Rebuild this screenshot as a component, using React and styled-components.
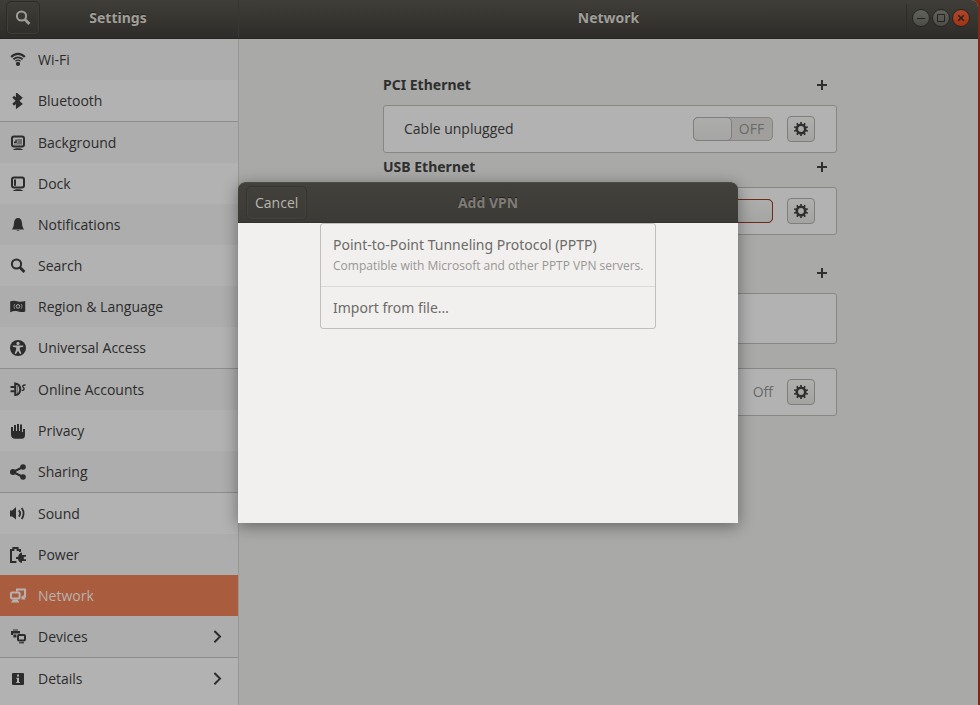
import React from 'react';
import styled, { createGlobalStyle, css } from 'styled-components';

const icons = {
    search: (
        <g fill="none" stroke="currentColor" strokeWidth="2">
            <circle cx="6.5" cy="6" r="4.6"/>
            <path d="M9.8 9.3 L14.4 13.9" strokeWidth="2.8"/>
        </g>
    ),
    wifi: (
        <g fill="none" stroke="currentColor">
            <path d="M1.2 5 C5 0.8 11 0.8 14.8 5" strokeWidth="2.2"/>
            <path d="M3.4 7.4 C6 4.8 10 4.8 12.6 7.4" strokeWidth="1.8"/>
            <path d="M5.4 9.2 C7 7.8 9 7.8 10.6 9.2" strokeWidth="1.2"/>
            <circle cx="8" cy="11.9" r="2.1" fill="currentColor" stroke="none"/>
        </g>
    ),
    bluetooth: (
        <path d="M3.2 3.8 L10.8 10.8 L7.2 13.6 V1.8 L10.8 4.8 L3.2 11.8" fill="none" stroke="currentColor" strokeWidth="2.6"/>
    ),
    background: (
        <g>
            <rect x="2" y="1.5" width="12" height="10" rx="2" fill="none" stroke="currentColor" strokeWidth="2"/>
            <path d="M7.4 4 h4.6 v5.4 h-8 v-1 h3.4 z" opacity="0.5"/>
            <path d="M4 8 V6.6 H5.4 V4.6 H6.8 V8 Z"/>
            <path d="M3 15 C3.6 12.8 12.4 12.8 13 15 Z"/>
        </g>
    ),
    dock: (
        <g>
            <rect x="2" y="1.5" width="12" height="10" rx="2" fill="none" stroke="currentColor" strokeWidth="2"/>
            <path d="M4 3.4 h2 v6.4 h-2 z"/>
            <path d="M3 15 C3.6 12.8 12.4 12.8 13 15 Z"/>
        </g>
    ),
    bell: (
        <path d="M8 1 C10.6 1 11.8 3 12 6 C12.2 9.4 13 11 14 12.4 H2 C3 11 3.8 9.4 4 6 C4.2 3 5.4 1 8 1 Z M6.4 13.2 h3.2 c-.4 1 -2.8 1 -3.2 0 z"/>
    ),
    region: (
        <g>
            <path d="M0.2 2.6 C3 1.2 5 2 8 2.6 C11 3.2 13 2.6 15.2 2 V12.4 C13 13.6 11 13 8 12.4 C5 11.8 3 12.2 0.2 13.2 Z"/>
            <g fill="none" stroke="#aeaeae" strokeWidth="1">
                <circle cx="8" cy="7.4" r="1.8"/>
                <path d="M4.8 5 C3.8 6.4 3.8 8.4 4.8 9.8 M11.2 5 C12.2 6.4 12.2 8.4 11.2 9.8" opacity="0.7"/>
            </g>
        </g>
    ),
    access: (
        <g>
            <circle cx="8" cy="8" r="8"/>
            <g fill="#b2b2b2">
                <circle cx="8" cy="3.4" r="1.6"/>
                <path d="M2.8 5.4 H13.2 V6.8 L9.8 7.4 V9.6 L11.4 13.4 L10 14 L8 10.8 L6 14 L4.6 13.4 L6.2 9.6 V7.4 L2.8 6.8 Z"/>
            </g>
        </g>
    ),
    accounts: (
        <g fill="none" stroke="currentColor">
            <path d="M0.5 5 H5 M0.5 9.2 H5" strokeWidth="2"/>
            <path d="M5.2 1.4 V13 C9 12.6 10.2 10 10.2 7.2 C10.2 4.4 9 1.8 5.2 1.4 Z" strokeWidth="2"/>
            <path d="M7.4 4 V11" opacity="0.5"/>
            <path d="M15.6 3 C13 2.8 12.2 3.8 13 5 C14.4 6.2 14.6 7.6 13 8.4 H11.6" strokeWidth="1.4"/>
        </g>
    ),
    hand: (
        <path d="M1 4 h2 v4 h1 V2 h2 v6 h1 V1 h2 v7 h1 V1.6 h2 V9 h1 V6 h2 v6 c0 2 -1 3.8 -3 3.8 h-7 c-2 0 -4 -1.6 -4 -4 z"/>
    ),
    share: (
        <g>
            <path d="M13 3 L3 8 L13 13" fill="none" stroke="currentColor" strokeWidth="2"/>
            <circle cx="13" cy="3" r="2.8"/>
            <circle cx="3" cy="8" r="3"/>
            <circle cx="13" cy="13" r="2.8"/>
        </g>
    ),
    sound: (
        <g>
            <path d="M0 4.6 H2.2 L6 1 V13.6 L2.2 10.6 H0 Z"/>
            <path d="M8.8 4.4 C10.4 6.2 10.4 8.8 8.8 10.6 M11.6 2 C14.2 5 14.2 10 11.6 13" fill="none" stroke="currentColor" strokeWidth="1.8"/>
        </g>
    ),
    power: (
        <g>
            <path d="M6.4 15 H1 V3 H3.4 V1 H7.6 V3 H10 V5" fill="none" stroke="currentColor" strokeWidth="2"/>
            <path d="M12 5.6 V8 H16 V9.8 H13.8 V12.2 H16 V14 H12 V16 C9.4 15.6 8.4 14 8 12 H6 V10 H8 C8.4 8 9.6 6 12 5.6 Z"/>
        </g>
    ),
    network: (
        <g>
            <path d="M7 3.4 V1.4 H15 V8.6 H12.6" fill="none" stroke="currentColor" strokeWidth="2"/>
            <rect x="1" y="4.6" width="8.6" height="6" rx="1" fill="none" stroke="currentColor" strokeWidth="2"/>
            <path d="M3 11.6 H7.6 L9.4 14.4 H1 Z M11.4 8.6 h2.6 l1.6 3 h-4.2 z"/>
        </g>
    ),
    devices: (
        <g>
            <path d="M3 0.4 h5 v1 h-5 z M1 2 h9 v2.4 h-9 z M3.4 5.6 h3 v2.8 h-3 z M1 2 h2 v4 H1 z"/>
            <rect x="8" y="6" width="7" height="5.6" rx="1" fill="none" stroke="currentColor" strokeWidth="2"/>
            <path d="M9.2 13.2 h4.8 v1.2 h-4.8 z"/>
        </g>
    ),
    details: (
        <g>
            <rect x="2" y="2" width="12" height="12" rx="1"/>
            <path d="M7 3.6 h2 v2 h-2 z M6.4 6.8 H9 V11 h.8 v1 H6.2 v-1 H7 V8 h-.6 z" fill="#b2b2b2"/>
        </g>
    ),
    gear: (
        <g fill="none" stroke="currentColor">
            <circle cx="8" cy="8" r="4.2" strokeWidth="2.6"/>
            <circle cx="8" cy="8" r="6" strokeWidth="2.2" pathLength="200" strokeDasharray="9 11" strokeDashoffset="4.5" transform="rotate(-90 8 8)"/>
        </g>
    ),
    plus: <path d="M7 3 h2 v4 h4 v2 h-4 v4 h-2 v-4 h-4 v-2 h4 z"/>,
    chevron: <path d="M5.4 2 L11 7.6 L5.4 13.2" fill="none" stroke="currentColor" strokeWidth="2"/>,
    minimize: <path d="M4 8 h8 v1 h-8 z"/>,
    maximize: <path d="M4.5 4.5 h7 v7 h-7 z" fill="none" stroke="currentColor"/>,
    close: <path d="M5.2 5.2 L10.8 10.8 M10.8 5.2 L5.2 10.8" fill="none" stroke="currentColor" strokeWidth="1.6"/>,
};

const panels = [
    { icon: 'wifi', label: 'Wi-Fi' },
    { icon: 'bluetooth', label: 'Bluetooth', last: true },
    { icon: 'background', label: 'Background' },
    { icon: 'dock', label: 'Dock' },
    { icon: 'bell', label: 'Notifications' },
    { icon: 'search', label: 'Search' },
    { icon: 'region', label: 'Region & Language' },
    { icon: 'access', label: 'Universal Access', last: true },
    { icon: 'accounts', label: 'Online Accounts' },
    { icon: 'hand', label: 'Privacy' },
    { icon: 'share', label: 'Sharing', last: true },
    { icon: 'sound', label: 'Sound' },
    { icon: 'power', label: 'Power' },
    { icon: 'network', label: 'Network', active: true },
    { icon: 'devices', label: 'Devices', more: true, last: true },
    { icon: 'details', label: 'Details', more: true },
];

function Icon ({ name }) {
    return (
        <Svg viewBox="0 0 16 16" fill="currentColor" aria-hidden="true">
            {icons[name]}
        </Svg>
    )
}

function Toggle ({ label, on }) {
    return (
        <Switch $on={on}>
            <input type="checkbox" role="switch" aria-label={label} defaultChecked={on}/>
            {!on && <Knob/>}
            <SwitchText>{on ? '' : 'OFF'}</SwitchText>
            {on && <Knob $on/>}
        </Switch>
    )
}

function Section ({ title, addLabel, spaced, children }) {
    return (
        <Group $spaced={spaced}>
            {addLabel && (
                <GroupHeader>
                    {title && <GroupTitle>{title}</GroupTitle>}
                    <AddButton type="button" aria-label={addLabel}><Icon name="plus"/></AddButton>
                </GroupHeader>
            )}
            {children}
        </Group>
    )
}

function GearButton ({ label }) {
    return <OptionsButton type="button" aria-label={label}><Icon name="gear"/></OptionsButton>
}

function App () {
    return (
        <Desktop>
            <GlobalStyle/>
            <Window>
                <TitleBar>
                    <SideHeader>
                        <HeaderButton type="button" aria-label="Search settings"><Icon name="search"/></HeaderButton>
                        <Title>Settings</Title>
                    </SideHeader>
                    <MainHeader>
                        <Title as="h1">Network</Title>
                        <WindowControls>
                            <ControlButton type="button" aria-label="Minimize"><Icon name="minimize"/></ControlButton>
                            <ControlButton type="button" aria-label="Maximize"><Icon name="maximize"/></ControlButton>
                            <ControlButton type="button" aria-label="Close" $close><Icon name="close"/></ControlButton>
                        </WindowControls>
                    </MainHeader>
                </TitleBar>
                <Body>
                    <Sidebar>
                        <PanelList>
                            {panels.map(({ icon, label, active, more, last }) => (
                                <PanelItem key={label} $last={last}>
                                    <PanelLink href="#" $active={active}>
                                        <Icon name={icon}/>
                                        <span>{label}</span>
                                        {more && <Icon name="chevron"/>}
                                    </PanelLink>
                                </PanelItem>
                            ))}
                        </PanelList>
                    </Sidebar>
                    <Main>
                        <Section title="PCI Ethernet" addLabel="Add PCI profile">
                            <Card>
                                <CardLabel>Cable unplugged</CardLabel>
                                <Toggle label="PCI Ethernet"/>
                                <GearButton label="PCI Ethernet options"/>
                            </Card>
                        </Section>
                        <Section title="USB Ethernet" addLabel="Add USB profile">
                            <Card>
                                <CardLabel/>
                                <Toggle label="USB Ethernet" on/>
                                <GearButton label="USB Ethernet options"/>
                            </Card>
                        </Section>
                        <Section addLabel="Add VPN connection" spaced>
                            <Card $tall/>
                        </Section>
                        <Section spaced>
                            <Card>
                                <CardLabel/>
                                <Status>Off</Status>
                                <GearButton label="Proxy options"/>
                            </Card>
                        </Section>
                    </Main>
                </Body>
            </Window>
            <Overlay>
                <Dialog role="dialog" aria-labelledby="vpn-title">
                    <DialogHeader>
                        <CancelButton type="button">Cancel</CancelButton>
                        <DialogTitle id="vpn-title">Add VPN</DialogTitle>
                    </DialogHeader>
                    <DialogBody>
                        <Options>
                            <li>
                                <Option type="button" $detailed>
                                    <OptionName>Point-to-Point Tunneling Protocol (PPTP)</OptionName>
                                    <OptionHint>Compatible with Microsoft and other PPTP VPN servers.</OptionHint>
                                </Option>
                            </li>
                            <li>
                                <Option type="button">
                                    <OptionName>Import from file…</OptionName>
                                </Option>
                            </li>
                        </Options>
                    </DialogBody>
                </Dialog>
            </Overlay>
        </Desktop>
    )
}

const GlobalStyle = createGlobalStyle`
    * {
        box-sizing: border-box;
    }
    body {
        margin: 0;
        font: 14px/20px "Open Sans", "Noto Sans", sans-serif;
        color: #2f2f2f;
    }
    button {
        font: inherit;
        color: inherit;
        padding: 0;
        border: 0;
        background: none;
    }
    h1, h2, ul {
        margin: 0;
        padding: 0;
    }
    ul {
        list-style: none;
    }
`;
const wideFont = css`
    font-family: "Noto Sans", "Open Sans", sans-serif;
`;
const Svg = styled.svg`
    display: block;
    flex: none;
    width: 16px;
    height: 16px;
`;
const Desktop = styled.div`
    position: relative;
    display: flex;
    min-height: 100vh;
    padding-right: 2px;
    background: #7d2813;
`;
const Window = styled.div`
    flex: 1;
    display: flex;
    flex-direction: column;
    background: #a9a9a7;
    border-radius: 0 7px 0 0;
`;
const TitleBar = styled.header`
    display: flex;
    height: 39px;
    background: linear-gradient(#3f3e39, #2d2c28);
    border-bottom: 1px solid #262521;
    border-radius: 0 7px 0 0;
    color: #a09e98;
`;
const headerGrid = css`
    display: grid;
    grid-template-columns: 1fr auto 1fr;
    align-items: center;
`;
const SideHeader = styled.div`
    ${headerGrid}
    width: 239px;
    padding: 0 8px 2px 6px;
    border-right: 1px solid #383732;
`;
const MainHeader = styled.div`
    ${headerGrid}
    flex: 1;
    padding: 0 8px 2px;
`;
const Title = styled.h2`
    ${wideFont}
    grid-column: 2;
    font-size: 14px;
    line-height: 20px;
    font-weight: 700;
    text-shadow: 0 -1px #23221f;
`;
const HeaderButton = styled.button`
    display: flex;
    align-items: center;
    justify-content: center;
    width: 34px;
    height: 34px;
    border: 1px solid #2b2a26;
    border-radius: 5px;
    box-shadow: inset 0 0 0 1px #403f3a;
`;
const WindowControls = styled.div`
    justify-self: end;
    display: flex;
    align-items: center;
    gap: 2px;
    height: 28px;
    padding-left: 5px;
    border-left: 1px solid #2c2b27;
`;
const ControlButton = styled.button`
    width: 18px;
    height: 18px;
    border: 1px solid #262521;
    border-radius: 50%;
    background: ${({ $close }) => $close ? 'linear-gradient(#b2462a, #a03414)' : 'linear-gradient(#62625c, #4d4c47)'};
    color: #24231f;
`;
const Body = styled.div`
    flex: 1;
    display: flex;
`;
const Sidebar = styled.nav`
    width: 239px;
    border-right: 1px solid #979795;
    background: #b2b2b2;
`;
const PanelList = styled.ul`
    display: flex;
    flex-direction: column;
`;
const PanelItem = styled.li`
    border-bottom: ${({ $last }) => $last ? '1px solid #8d8d8d' : '0'};
    &:nth-child(odd) {
        background: #adadad;
    }
`;
const PanelLink = styled.a`
    display: flex;
    align-items: center;
    gap: 12px;
    height: 41px;
    padding: 0 13px 0 10px;
    color: ${({ $active }) => $active ? '#b8b2af' : '#2c2c2c'};
    background: ${({ $active }) => $active ? '#a95c3e' : 'transparent'};
    text-decoration: none;
    span {
        flex: 1;
    }
`;
const Main = styled.main`
    flex: 1;
    display: flex;
    flex-direction: column;
    align-items: center;
    padding: 32px 0 32px 3px;
`;
const Group = styled.section`
    width: 100%;
    max-width: 454px;
    margin-top: ${({ $spaced }) => $spaced ? '24px' : '0'};
`;
const GroupHeader = styled.div`
    display: flex;
    align-items: center;
    height: 28px;
    margin-bottom: 6px;
`;
const GroupTitle = styled.h2`
    ${wideFont}
    font-size: 14px;
    line-height: 20px;
    font-weight: 700;
`;
const AddButton = styled.button`
    display: flex;
    align-items: center;
    justify-content: center;
    width: 30px;
    height: 28px;
    margin-left: auto;
`;
const Card = styled.div`
    display: flex;
    align-items: center;
    gap: 14px;
    height: ${({ $tall }) => $tall ? '51px' : '48px'};
    padding: 0 21px 0 20px;
    border: 1px solid #878783;
    border-radius: 3px;
    background: #b2b2b2;
`;
const CardLabel = styled.span`
    flex: 1;
`;
const Status = styled.span`
    color: #6a6a68;
`;
const Switch = styled.label`
    display: flex;
    width: 80px;
    height: 24px;
    border: 1px solid ${({ $on }) => $on ? '#6f2c1a' : '#858583'};
    border-radius: 5px;
    background: ${({ $on }) => $on ? '#a5502f' : '#a09f9d'};
    color: #6a6a68;
    input {
        position: absolute;
        opacity: 0;
        pointer-events: none;
    }
`;
const Knob = styled.span`
    width: 39px;
    margin: -1px;
    border: 1px solid ${({ $on }) => $on ? '#6f2c1a' : '#7e7e7c'};
    border-radius: 5px;
    background: linear-gradient(#adadac, #a5a5a4);
`;
const SwitchText = styled.span`
    flex: 1;
    line-height: 22px;
    text-align: center;
`;
const OptionsButton = styled.button`
    display: flex;
    align-items: center;
    justify-content: center;
    width: 28px;
    height: 26px;
    border: 1px solid #7e7e7c;
    border-radius: 4px;
    background: linear-gradient(#afafae, #a3a3a1);
`;
const Overlay = styled.div`
    position: absolute;
    inset: 0 4px 0 0;
    display: flex;
    align-items: center;
    justify-content: center;
`;
const Dialog = styled.div`
    width: 500px;
    border-radius: 7px 7px 0 0;
    background: #f1f0ee;
    box-shadow: 0 3px 16px rgba(0, 0, 0, 0.4);
`;
const DialogHeader = styled.div`
    ${headerGrid}
    height: 41px;
    padding: 0 8px;
    border-top: 1px solid #4d4c47;
    border-bottom: 1px solid #33322e;
    border-radius: 7px 7px 0 0;
    background: linear-gradient(#42413c, #3b3a36);
`;
const CancelButton = styled.button`
    justify-self: start;
    height: 34px;
    padding: 0 8px;
    border: 1px solid #34332f;
    border-radius: 5px;
    box-shadow: inset 0 0 0 1px #45443f;
    color: #b9b6ae;
`;
const DialogTitle = styled(Title)`
    color: #807d76;
`;
const DialogBody = styled.div`
    display: flex;
    justify-content: center;
    align-items: flex-start;
    min-height: 300px;
`;
const Options = styled.ul`
    width: 336px;
    border: 1px solid #c0bfbd;
    border-radius: 3px;
    li + li {
        border-top: 1px solid #dbdad8;
    }
`;
const Option = styled.button`
    display: flex;
    flex-direction: column;
    justify-content: center;
    width: 100%;
    height: ${({ $detailed }) => $detailed ? '62px' : '41px'};
    padding: 0 12px;
    text-align: left;
    white-space: nowrap;
`;
const OptionName = styled.span`
    ${wideFont}
    line-height: 22px;
    color: #6c6b69;
`;
const OptionHint = styled.span`
    font-size: 12px;
    line-height: 20px;
    color: #979694;
`;

export default App;
